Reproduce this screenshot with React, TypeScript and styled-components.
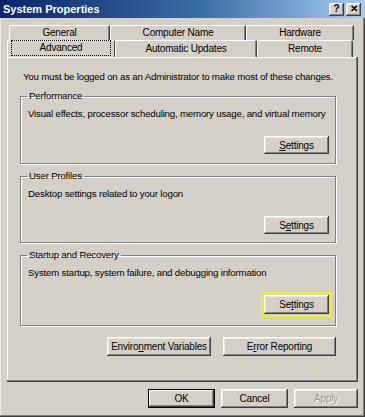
import React from 'react';
import styled, { createGlobalStyle, css } from 'styled-components';

const GlobalStyle = createGlobalStyle`
  html, body {
    margin: 0;
    padding: 0;
    background: #d4d0c8;
  }
  body {
    font-family: 'Liberation Sans', Arial, sans-serif;
    font-size: 9.7px;
    letter-spacing: -0.2px;
    color: #000;
  }
`;

const raised = css`
  box-shadow:
    inset -1px -1px 0 #404040,
    inset 1px 1px 0 #ffffff,
    inset -2px -2px 0 #808080,
    inset 2px 2px 0 #ece9e2;
`;

const Window = styled.div`
  width: 365px;
  height: 417px;
  box-sizing: border-box;
  background: #d4d0c8;
  display: flex;
  flex-direction: column;
  box-shadow:
    inset -1px -1px 0 #404040,
    inset -2px -2px 0 #808080,
    inset 1px 0 0 #ece9e2;
  overflow: hidden;
`;

const TitleBar = styled.div`
  height: 18px;
  display: flex;
  align-items: center;
  justify-content: space-between;
  padding: 0 4px 0 3px;
  background: linear-gradient(to right, #0a246a 0%, #3a6ea5 55%, #a6caf0 100%);
`;

const Title = styled.span`
  color: #fff;
  font-weight: bold;
  font-size: 11px;
  letter-spacing: 0;
`;

const Caption = styled.div`
  display: flex;
  gap: 2px;
`;

const CaptionButton = styled.div`
  width: 15px;
  height: 13px;
  background: #d4d0c8;
  ${raised};
  display: flex;
  align-items: center;
  justify-content: center;
  font-weight: bold;
  font-size: 10px;
  line-height: 1;
`;

const Body = styled.div`
  flex: 1;
  display: flex;
  flex-direction: column;
  padding: 7px 7px 0 7px;
`;

const TabRow = styled.div<{ $front?: boolean }>`
  display: flex;
  padding-left: 2px;
  height: ${(p) => (p.$front ? 17 : 15)}px;
`;

const Tab = styled.div<{ $w: number; $selected?: boolean }>`
  width: ${(p) => p.$w}px;
  box-sizing: border-box;
  display: flex;
  align-items: center;
  justify-content: center;
  border-top-left-radius: 2px;
  border-top-right-radius: 2px;
  background: #d4d0c8;
  font-size: 10px;
  box-shadow:
    inset 1px 1px 0 #ffffff,
    inset -1px 0 0 #404040,
    inset -2px 0 0 #808080;
  padding-bottom: 1px;
  ${(p) =>
    p.$selected &&
    css`
      margin-left: -2px;
      width: ${p.$w + 2}px;
      z-index: 1;
      box-shadow: inset 1px 1px 0 #ffffff, inset -1px 0 0 #404040;
    `}
`;

const FocusLabel = styled.span`
  outline: 1px dotted #000;
  padding: 1px 28px 2px 28px;
`;

const Panel = styled.div`
  width: 351px;
  height: 325px;
  box-sizing: border-box;
  padding: 12px 22px 0 13px;
  display: flex;
  flex-direction: column;
  box-shadow:
    inset -1px -1px 0 #404040,
    inset -2px -2px 0 #808080,
    inset 1px 1px 0 #ffffff;
`;

const Notice = styled.div`
  padding-left: 3px;
  height: 15px;
  line-height: 15px;
  margin-bottom: 6px;
  white-space: nowrap;
`;

const Group = styled.fieldset<{ $h: number }>`
  margin: 0 0 6px 0;
  padding: 0 6px 0 6px;
  height: ${(p) => p.$h}px;
  box-sizing: border-box;
  border: 1px solid #808080;
  box-shadow: 1px 1px 0 #ffffff, inset 1px 1px 0 #ffffff;
  min-width: 0;
`;

const Legend = styled.legend`
  padding: 0 2px;
  line-height: 12px;
`;

const Description = styled.div`
  padding-left: 1px;
  margin-top: 5px;
  line-height: 13px;
  white-space: nowrap;
`;

const ButtonRow = styled.div<{ $gap: number; $top: number }>`
  margin-top: ${(p) => p.$top}px;
  display: flex;
  justify-content: flex-end;
  gap: ${(p) => p.$gap}px;
`;

const Button = styled.div<{
  $w: number;
  $h?: number;
  $default?: boolean;
  $disabled?: boolean;
  $highlight?: boolean;
}>`
  width: ${(p) => p.$w}px;
  height: ${(p) => p.$h ?? 19}px;
  box-sizing: border-box;
  display: flex;
  align-items: center;
  justify-content: center;
  background: #d4d0c8;
  font-size: 10px;
  color: ${(p) => (p.$disabled ? '#9a978f' : '#000')};
  text-shadow: ${(p) => (p.$disabled ? '1px 1px 0 #ffffff' : 'none')};
  ${(p) =>
    p.$default
      ? css`
          box-shadow:
            inset 0 0 0 1px #000,
            inset -2px -2px 0 #404040,
            inset 2px 2px 0 #ffffff,
            inset -3px -3px 0 #808080;
        `
      : raised};
  ${(p) =>
    p.$highlight &&
    css`
      outline: 2px solid #f2ef1c;
      outline-offset: 1px;
    `}
`;

const Footer = styled.div`
  display: flex;
  justify-content: flex-end;
  gap: 6px;
  padding: 7px 0 0 0;
`;

const Key = styled.u`
  text-decoration: underline;
`;

const Settings: React.FC<{ keyIndex: number; highlight?: boolean }> = ({ keyIndex, highlight }) => {
  const word = 'Settings';
  return (
    <Button $w={65} $h={highlight ? 19 : 18} $highlight={highlight}>
      {word.slice(0, keyIndex)}
      <Key>{word[keyIndex]}</Key>
      {word.slice(keyIndex + 1)}
    </Button>
  );
};

const groups = [
  {
    title: 'Performance',
    text: 'Visual effects, processor scheduling, memory usage, and virtual memory',
    key: 0,
    h: 74,
    gap: 16,
  },
  {
    title: 'User Profiles',
    text: 'Desktop settings related to your logon',
    key: 1,
    h: 73,
    gap: 16,
  },
  {
    title: 'Startup and Recovery',
    text: 'System startup, system failure, and debugging information',
    key: 2,
    h: 77,
    gap: 16,
    highlight: true,
  },
];

export default function App() {
  return (
    <>
      <GlobalStyle />
      <Window>
        <TitleBar>
          <Title>System Properties</Title>
          <Caption>
            <CaptionButton>?</CaptionButton>
            <CaptionButton>✕</CaptionButton>
          </Caption>
        </TitleBar>
        <Body>
          <TabRow>
            <Tab $w={101}>General</Tab>
            <Tab $w={136}>Computer Name</Tab>
            <Tab $w={108}>Hardware</Tab>
          </TabRow>
          <TabRow $front>
            <Tab $w={106} $selected>
              <FocusLabel>Advanced</FocusLabel>
            </Tab>
            <Tab $w={142}>Automatic Updates</Tab>
            <Tab $w={96}>Remote</Tab>
          </TabRow>
          <Panel>
            <Notice>You must be logged on as an Administrator to make most of these changes.</Notice>
            {groups.map((g) => (
              <Group key={g.title} $h={g.h}>
                <Legend>{g.title}</Legend>
                <Description>{g.text}</Description>
                <ButtonRow $gap={0} $top={g.gap}>
                  <Settings keyIndex={g.key} highlight={g.highlight} />
                </ButtonRow>
              </Group>
            ))}
            <ButtonRow $gap={12} $top={5}>
              <Button $w={104}>
                Enviro<Key>n</Key>ment Variables
              </Button>
              <Button $w={113}>
                E<Key>r</Key>ror Reporting
              </Button>
            </ButtonRow>
          </Panel>
          <Footer>
            <Button $w={67} $default>
              OK
            </Button>
            <Button $w={67}>Cancel</Button>
            <Button $w={64} $disabled>
              Apply
            </Button>
          </Footer>
        </Body>
      </Window>
    </>
  );
}
